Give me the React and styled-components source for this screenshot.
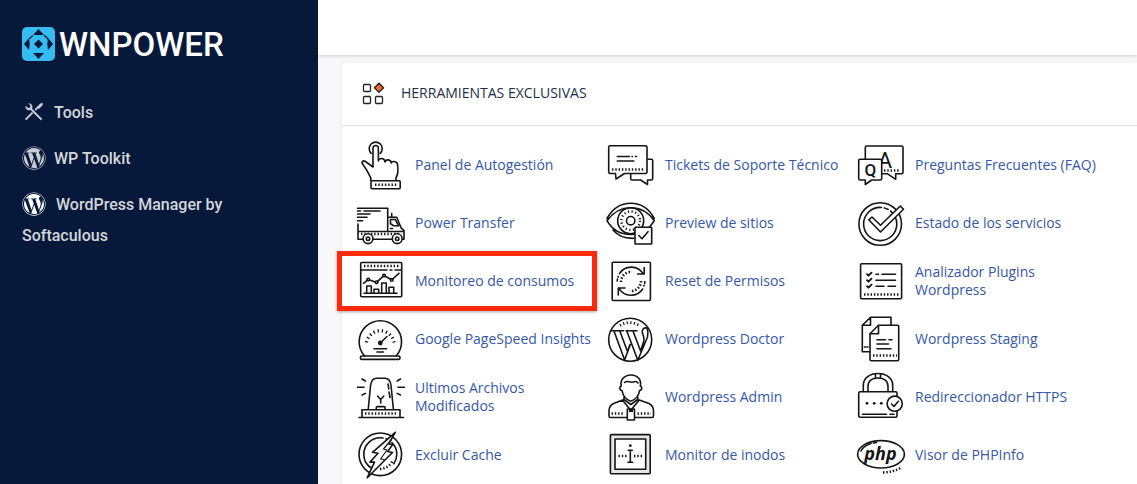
import React from "react";
import styled, { createGlobalStyle } from "styled-components";
import { FaWordpress } from "react-icons/fa";

const GlobalStyle = createGlobalStyle`
  * {
    box-sizing: border-box;
  }
  body {
    margin: 0;
    background-color: #f8f8fa;
    font-family: "Open Sans", "Liberation Sans", sans-serif;
  }
`;

const Layout = styled.div`
  display: grid;
  grid-template-columns: 318px minmax(0, 1fr);
  min-height: 100vh;
`;

const Sidebar = styled.aside`
  padding: 26px 22px 0;
  background-color: #07193b;
  color: #d3d6da;
  font-family: Roboto, "Liberation Sans", sans-serif;
`;
const Brand = styled.a`
  display: flex;
  align-items: center;
  gap: 4px;
  height: 36px;
  color: white;
  font-size: 33px;
  font-weight: 500;
  text-decoration: none;
`;
const Menu = styled.ul`
  margin: 35px 0 0;
  padding: 0;
  list-style: none;
`;
const MenuItem = styled.li`
  margin-bottom: 15px;
`;
const MenuLink = styled.a`
  display: block;
  max-width: 210px;
  color: inherit;
  font-size: 16px;
  font-weight: 500;
  line-height: 31px;
  text-decoration: none;
  svg {
    width: 24px;
    height: 24px;
    margin: 0 ${(props) => (props.$bright ? "10px" : "8px")} 4px 0;
    vertical-align: middle;
    color: ${(props) => (props.$bright ? "#ffffff" : "#c9cdd3")};
  }
`;

const Content = styled.div`
  overflow: hidden;
`;
const TopBar = styled.header`
  height: 55px;
  background-color: white;
  box-shadow: 0 1px 3px rgba(0, 0, 0, 0.18);
`;
const Card = styled.section`
  margin: 8px 0 0 24px;
  background-color: white;
  border-radius: 4px 0 0 0;
  box-shadow: 0 0 5px rgba(0, 0, 0, 0.06);
`;
const CardHeader = styled.div`
  display: flex;
  align-items: center;
  gap: 16px;
  height: 63px;
  padding: 0 19px;
  border-bottom: 1px solid #e6e7e9;
`;
const CardTitle = styled.h2`
  margin: 0 0 4px;
  color: #1c3048;
  font-size: 14px;
  font-weight: 400;
`;
const ToolGrid = styled.ul`
  display: grid;
  grid-template-columns: repeat(auto-fill, 250px);
  grid-auto-rows: 58px;
  margin: 0;
  padding: 10px 0 0 14px;
  list-style: none;
`;
const ToolItem = styled.li`
  position: relative;
  display: flex;
`;
const Marker = styled.span`
  position: absolute;
  top: -1px;
  left: -19px;
  width: 260px;
  height: 60px;
  border: 5px solid #fb2a0d;
  box-shadow: 0 1px 3px rgba(0, 0, 0, 0.35);
  pointer-events: none;
`;
const ToolLink = styled.a`
  display: flex;
  align-items: center;
  gap: 11px;
  color: #3558a8;
  font-size: 14px;
  line-height: 18px;
  text-decoration: none;
  &:hover {
    text-decoration: underline;
  }
`;
const ToolName = styled.span`
  max-width: ${(props) => (props.$narrow ? "130px" : "none")};
  white-space: ${(props) => (props.$narrow ? "normal" : "nowrap")};
`;
const Glyph = styled.svg`
  flex: none;
  overflow: visible;
  fill: none;
  stroke: #151515;
  stroke-width: 1.6;
  stroke-linecap: round;
  stroke-linejoin: round;
  .solid {
    fill: #151515;
    stroke: none;
  }
  .paper {
    fill: white;
  }
  .ticks {
    stroke-width: 2.6;
    stroke-linecap: butt;
    stroke-dasharray: 1.4 1.9;
  }
  text {
    fill: #151515;
    stroke: none;
  }
`;

const LogoMark = () => (
  <svg width="33" height="34" viewBox="0 0 33 34" aria-hidden="true">
    <rect width="33" height="34" rx="5" fill="#35bdf2" />
    <g fill="#07193b">
      <path d="M16.5 2 22 8H11zM16.5 32 11 26h11zM2 17l5-6q1.500 6 0 12zM31 17l-5-6q-1.500 6 0 12z" />
      <path d="M16.5 12.500 21 17l-4.500 4.500L12 17z" />
    </g>
    <path
      d="M22 8.500q3 1.500 4 4M7.500 12q1-2.200 3.500-3.500"
      fill="none"
      stroke="#07193b"
      strokeWidth="1.4"
    />
  </svg>
);

const ToolsIcon = () => (
  <svg viewBox="0 0 24 24" fill="none" stroke="currentColor" aria-hidden="true">
    <path d="M9 9 19.6 19.6M3.6 19.6l7-7M13.2 10l2.6-2.6" strokeWidth="2" />
    <path d="M3.6 5.6 6 8l2-.4.5-2L6.2 3.2a3.7 3.7 0 0 1 3.9 5.4L8.8 9.9a3.7 3.7 0 0 1-5.2-4.3z" fill="currentColor" stroke="none" />
    <path d="M14.8 7 18.3 3.5l1.8-.6.9.9-.6 1.8L16.9 9.1z" fill="currentColor" stroke="none" />
  </svg>
);

const GroupIcon = () => (
  <svg width="24" height="24" viewBox="0 1 24 24" fill="none" stroke="#222" strokeWidth="1.3" aria-hidden="true">
    <rect x="2.5" y="3.5" width="7" height="7" rx="1" />
    <rect x="2.5" y="15.5" width="7" height="7" rx="1" />
    <rect x="14.5" y="15.5" width="7" height="7" rx="1" />
    <path d="M18 2.2 22.600 6.800 18 11.400 13.400 6.800z" fill="#f0652b" strokeLinejoin="round" />
  </svg>
);

const icons = {
  hand: (
    <>
      <path d="M15.2 12.3a6.5 6.5 0 1 1 9 0" />
      <path d="M14.8 39.5v-2.7C12.5 32 10 27.500 6.600 23c-1.600-2.200.8-4 2.800-2.500L17 26V7.200a2.700 2.700 0 0 1 5.400 0V20c.2-3.400 6.300-3.600 6.600 1 .6-3.200 6-2.800 6.200 1 .8-2.400 5.800-2 6.300 1.500.8 5.500.6 10-1.500 13.200v2.800" />
      <rect x="15" y="39.7" width="29.2" height="8" rx="1" />
      <path className="ticks" d="M19 43.7h23" />
    </>
  ),
  truck: (
    <>
      <path d="M1.5 9.3h30.200v23M1.500 12h3M8 12h16M1.500 15h12.500M1.500 18.300h9.500M1.500 21.700h5M2 25v15.300h4.500M2 32.500h46M17 40.300h19.500M31.700 18.300h9l4.600 11 2.700 2v9h-2" />
      <path d="M34.5 20.500h4.700l3.500 6.300h-5l-3.200-2zM35.700 18v-3.500M34.500 29.500h2" />
      <path className="ticks" d="M5 35h38" />
      <circle className="paper" cx="12" cy="39.7" r="4.9" />
      <circle cx="12" cy="39.7" r="1.7" />
      <circle className="paper" cx="41.2" cy="39.7" r="4.9" />
      <circle cx="41.2" cy="39.7" r="1.7" />
    </>
  ),
  chart: (
    <>
      <rect x="4.7" y="5.5" width="41" height="34.2" rx="1" />
      <path className="ticks" d="M8 9h35" />
      <path d="M5 13h26M34 13h2M39 13h6M7.500 26.300l3.700-3M13.500 22.900l5.900 2M21.700 24.300l5.200-5M29.200 19.200l5.400 3M36.700 22l6.300-5.700" />
      <circle cx="12.3" cy="22.5" r="1.3" />
      <circle cx="20.6" cy="25.3" r="1.3" />
      <circle cx="28" cy="18.5" r="1.3" />
      <circle cx="35.7" cy="22.9" r="1.3" />
      <path d="M8 36.300h33M10.700 36.300V29h4.600v7.300M18 36.300v-4h4.700v4M25.700 36.300V26h4.600v10.300M33 36.300v-6h4.700v6" />
    </>
  ),
  gauge: (
    <>
      <path d="M8.5 41a21.200 21.200 0 1 1 31.700 0" />
      <rect x="4.4" y="41" width="39.6" height="3.4" rx="1.5" />
      <path d="M10.5 27.500a14 14 0 0 1 27.600 0" strokeWidth="3.2" strokeLinecap="butt" strokeDasharray="1.3 2.9" />
      <path d="M24.3 28l6.600-6.500M18 33.700h12.600M21 37h6.500" />
      <circle className="solid" cx="24.3" cy="28" r="2.4" />
    </>
  ),
  siren: (
    <>
      <path d="M12.2 36.500 14.500 13c.6-5 2.600-7.700 6-7.700h8.600c3.400 0 5.400 2.700 6 7.700l2.300 23.500" />
      <path d="M32 11l.8 5M33 19l1 5.500M20.300 36.500v-1.700q0-1.200 1.200-1.200h6.400q1.200 0 1.200 1.200v1.700M21.700 23.200l3 3.300 3-3.300M24.700 26.500v3.500" />
      <path d="M6 44.200v-7.500h38v7.500M3 44.500h44.500M1.500 14.300H8M42 14.300h6.500M6 6l3.300 2M44.500 6l-3.300 2M6 22l3.300-1.600M44.500 22l-3.300-1.600" />
      <path className="ticks" d="M9 40.500h33" />
    </>
  ),
  bolt: (
    <>
      <circle cx="24.3" cy="23.3" r="21.3" />
      <circle cx="24.3" cy="23.3" r="16.5" strokeDasharray="10 24 46 3 4 3 20" />
      <path className="ticks" d="M24 38a15 15 0 0 0 13-9" />
      <path className="paper" d="M39.3 1.300 16.500 21.300l5.500 1-8 8.800h4.500L11.300 46.700 36.500 21.500l-4.800-1 5-7-4-.6z" />
      <path d="M35.500 8.500 27.500 18l3.500 1-6.500 9 3.500.5" strokeWidth="1.2" />
    </>
  ),
  chat: (
    <>
      <path d="M42 18.300h3.200q1.500 0 1.500 1.500V37.500q0 1.500-1.500 1.500h-3.700v4.500L34.500 39h-8.300q-1.500 0-1.500-1.500V33" />
      <path className="paper" d="M4.2 4.800h35.300q1.500 0 1.500 1.500v24.700q0 1.500-1.500 1.500H18.500L10 38l-.5-5.500H4.200q-1.500 0-1.500-1.500V6.300q0-1.500 1.500-1.500z" />
      <path d="M11.3 15.500h12M26 15.500h.5M29.500 15.500h1M11.300 20h16.500" />
      <path className="ticks" d="M6 28.5h33" />
    </>
  ),
  eye: (
    <>
      <path d="M1 19.500C6.500 9.500 15 4.200 24.700 4.200S43 9.500 48.300 19.500M1 21.700C7 13.500 15 8.800 24.700 8.800S42.500 13.500 48.300 21.700C42.500 31.500 34 35.500 24.700 35.500S6.500 31.500 1 21.700zM7 31c5 6 11 8.700 21 8.300" />
      <circle cx="24.7" cy="21.7" r="13" />
      <circle cx="24.7" cy="21.7" r="9.3" strokeWidth="2.4" strokeLinecap="butt" strokeDasharray="1.2 2.5" />
      <circle cx="24.7" cy="21.7" r="4.2" />
      <rect className="paper" x="29" y="28.3" width="16.7" height="16.7" rx=".5" />
      <path d="M32.8 36.500 36 39.700l6-7" />
    </>
  ),
  reset: (
    <>
      <rect x="6.2" y="5.3" width="38.2" height="38.2" rx="1" />
      <path d="M13.5 16.500a14 14 0 0 1 23.800.5M36.700 32a14 14 0 0 1-23.700-.7M38.200 10.500V17h-6.500M12.300 38v-7H19" />
      <path d="M11.2 24c.1-1.500.5-3 1-4.500M38.900 24.500c-.1 1.500-.5 3-1 4.500" strokeDasharray="2 2" />
      <path className="ticks" d="M15 25a10 10 0 0 1 11-10M35 24a10 10 0 0 1-11 10" />
    </>
  ),
  wordpress: (
    <>
      <circle cx="24.2" cy="24.7" r="21.5" />
      <path d="M5.5 15.700h12M20 15.700h11M8 16l10.600 29 5.700-15.500M13.800 16l7.700 20.500 2.500-7M20.800 16l11 29.300L41.500 22c1-4 .5-6.500-.5-9M27 16l7.600 20 3.200-10c1-3.500-1-6-1.500-8.500-.5-3 1.500-5 4.200-4.500" />
      <path d="M14 10.500a17 17 0 0 1 19 0" strokeWidth="2.8" strokeLinecap="butt" strokeDasharray="1.2 2.4" />
    </>
  ),
  admin: (
    <>
      <path d="M16 17.500c-2.600 0-2.800-4-.7-4.500-1.500-6 3-11 9.700-11s10.700 5 9.300 11c2.100.5 1.900 4.500-.7 4.500-.8 5-4.300 9.500-8.800 10.700-4.500-1.200-8-5.700-8.800-10.700zM18.500 9.500c3-2.500 5.500.5 8.500-.5 2-.8 4-.5 5 1" />
      <path d="M18 24v2.500L7.500 30.500C4.500 32 3 34 3 38v5q0 1.500 1.500 1.500h16M29 44.500h17q1.500 0 1.500-1.500v-5c0-4-1.500-6-4.500-7.500L31.800 26.500V24M16.500 27.200l8.300 10 8.300-10M18 26.500l6.800 5 7-5" />
      <rect className="paper" x="21.3" y="36" width="7.2" height="11" rx=".5" />
      <path className="solid" d="M23 36h4v3h-4z" />
      <path className="ticks" d="M5.5 40.500h13M31.500 40.500h13.500" />
    </>
  ),
  inodes: (
    <>
      <rect x="4.4" y="3.6" width="39.8" height="39.2" rx="1" fill="#e6e6e6" />
      <rect className="paper" x="9" y="8" width="30.7" height="30.3" />
      <circle className="solid" cx="24.3" cy="14.7" r="1.4" />
      <path d="M22.3 19.300h4M24.300 19.300V31M22 31.300h4.700" />
      <path className="ticks" d="M12.5 25h8.500M28 25h9" />
    </>
  ),
  faq: (
    <>
      <path d="M10.8 5h34.700Q47 5 47 6.500v24.700q0 1.500-1.500 1.500h-5.800v5.600l-8.400-5.600H10.800q-1.500 0-1.500-1.500V6.500Q9.300 5 10.800 5z" />
      <text x="29" y="26.500" textAnchor="middle" fontFamily="Roboto, sans-serif" fontSize="22">A</text>
      <path className="ticks" d="M28 29.5h16" />
      <path className="paper" d="M4.2 18.300h20q1.500 0 1.500 1.500v17.700q0 1.500-1.500 1.500h-8.500L9.300 43.500V39H4.200q-1.500 0-1.500-1.500V19.800q0-1.500 1.500-1.500z" />
      <text x="14.3" y="34.5" textAnchor="middle" fontFamily="Roboto, sans-serif" fontSize="17" fontWeight="500">Q</text>
    </>
  ),
  check: (
    <>
      <circle cx="24.2" cy="25" r="21.3" />
      <circle cx="24.2" cy="25" r="16.6" strokeDasharray="79 3 4 3 30" />
      <path className="paper" d="M12.8 20.800 16 18l8.500 8.300L44.300 7l3.200 3.300L24.500 33z" />
    </>
  ),
  checklist: (
    <>
      <rect x="4.6" y="6.7" width="41" height="35" rx="1" />
      <path d="M11 17.200l1.500 1.500 3-3M11 23.200l1.500 1.500 3-3M11 29.200l1.500 1.500 3-3" strokeWidth="1.9" />
      <path d="M20 17.300h2.500M26 17.300h13.500M20 23.300h19.500M20 29.200h8M32 29.200h7.500" />
      <path className="ticks" d="M8 37.5h36" />
    </>
  ),
  pages: (
    <>
      <path d="M14.5 2.300H35v8M6.300 10.300 14.500 2.300v8zM6.300 10.300v26.400H14M8.500 32h1M11 32h1" />
      <path className="paper" d="M22.5 10.300h19q1.200 0 1.200 1.200v33q0 1.200-1.200 1.200H15.200q-1.200 0-1.200-1.200V18.700z" />
      <path d="M22.5 10.500v8.200h-8.300M21 24.700h8.500M33 24.700h3M21 29h11.500M21 33.700h14" />
      <path className="ticks" d="M17 40.5h24" />
    </>
  ),
  lock: (
    <>
      <path d="M7.3 18.500V12.500C7.300 5 13.800.5 22 .5s14.700 4.500 14.700 12v6M12 18.500v-5C12 8 16 5 22 5s10 3 10 8.500v5M19.500.8v4.400M24.500.8v4.400" />
      <rect x="2.7" y="18.7" width="38.3" height="25.6" rx="1.5" />
      <path d="M6.5 41.200h24M34 41.200h4" />
      <circle className="solid" cx="11" cy="30.3" r="1.4" />
      <circle className="solid" cx="18.2" cy="30.3" r="1.4" />
      <circle className="solid" cx="25.3" cy="30.3" r="1.4" />
      <circle className="paper" cx="38.7" cy="30.7" r="7.6" />
      <path d="M35.5 31l2.500 2.500 4.300-5.200" />
    </>
  ),
  php: (
    <>
      <ellipse cx="25" cy="23.3" rx="23.4" ry="13.7" />
      <path d="M5 20c1.500-3.500 5-6 10-7.500M17.500 12l3-.5" />
      <text x="24.5" y="28.5" textAnchor="middle" fontFamily="Open Sans, sans-serif" fontSize="18" fontWeight="700" fontStyle="italic">php</text>
      <path className="ticks" d="M27 41.500c7-.3 13-1.800 18.500-5" />
    </>
  ),
};

const menu = [
  { name: "Tools", icon: <ToolsIcon /> },
  { name: "WP Toolkit", icon: <FaWordpress aria-hidden="true" /> },
  {
    name: "WordPress Manager by Softaculous",
    icon: <FaWordpress aria-hidden="true" />,
    bright: true,
  },
];

const tools = [
  { name: "Panel de Autogestión", icon: "hand" },
  { name: "Tickets de Soporte Técnico", icon: "chat" },
  { name: "Preguntas Frecuentes (FAQ)", icon: "faq" },
  { name: "Power Transfer", icon: "truck" },
  { name: "Preview de sitios", icon: "eye" },
  { name: "Estado de los servicios", icon: "check" },
  { name: "Monitoreo de consumos", icon: "chart", marked: true },
  { name: "Reset de Permisos", icon: "reset" },
  { name: "Analizador Plugins Wordpress", icon: "checklist", narrow: true },
  { name: "Google PageSpeed Insights", icon: "gauge" },
  { name: "Wordpress Doctor", icon: "wordpress" },
  { name: "Wordpress Staging", icon: "pages" },
  { name: "Ultimos Archivos Modificados", icon: "siren", narrow: true },
  { name: "Wordpress Admin", icon: "admin" },
  { name: "Redireccionador HTTPS", icon: "lock" },
  { name: "Excluir Cache", icon: "bolt" },
  { name: "Monitor de inodos", icon: "inodes" },
  { name: "Visor de PHPInfo", icon: "php" },
];

export default function App() {
  return (
    <>
      <GlobalStyle />
      <Layout>
        <Sidebar>
          <Brand href="#">
            <LogoMark />
            WNPOWER
          </Brand>
          <nav>
            <Menu>
              {menu.map((item) => (
                <MenuItem key={item.name}>
                  <MenuLink href="#" $bright={item.bright}>
                    {item.icon}
                    {item.name}
                  </MenuLink>
                </MenuItem>
              ))}
            </Menu>
          </nav>
        </Sidebar>
        <Content>
          <TopBar />
          <Card>
            <CardHeader>
              <GroupIcon />
              <CardTitle>HERRAMIENTAS EXCLUSIVAS</CardTitle>
            </CardHeader>
            <ToolGrid>
              {tools.map((tool) => (
                <ToolItem key={tool.name}>
                  <ToolLink href="#">
                    <Glyph width="48" height="48" viewBox="0 0 48 48" aria-hidden="true">
                      {icons[tool.icon]}
                    </Glyph>
                    <ToolName $narrow={tool.narrow}>{tool.name}</ToolName>
                  </ToolLink>
                  {tool.marked && <Marker />}
                </ToolItem>
              ))}
            </ToolGrid>
          </Card>
        </Content>
      </Layout>
    </>
  );
}
